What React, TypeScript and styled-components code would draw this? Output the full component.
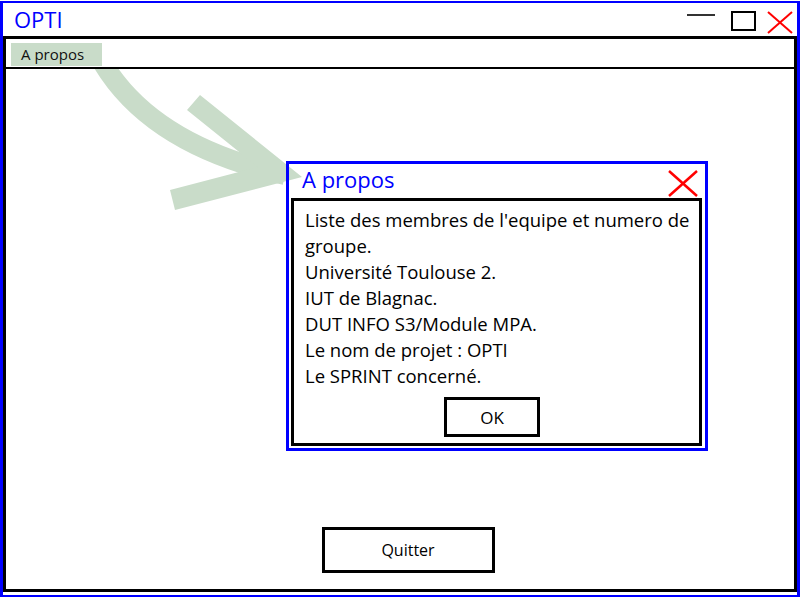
import React from "react";
import styled, { createGlobalStyle } from "styled-components";

const GlobalStyle = createGlobalStyle`
  html, body { margin: 0; padding: 0; background: #ffffff; }
  body { font-family: "Open Sans", "Noto Sans", sans-serif; color: #000; }
  * { box-sizing: border-box; }
`;

const GREEN = "#c9dcc9";
const BLUE = "#0000ff";
const RED = "#ff0000";

const Window = styled.div`
  width: 800px;
  height: 596px;
  margin-top: 1px;
  border-style: solid;
  border-color: ${BLUE};
  border-width: 2px 3px;
  display: flex;
  flex-direction: column;
`;

const TitleBar = styled.div`
  height: 33px;
  display: flex;
  align-items: flex-start;
  padding-left: 11px;
  padding-right: 4px;
`;

const AppTitle = styled.div`
  flex: 1;
  font-size: 22px;
  line-height: 33px;
  color: ${BLUE};
`;

const Controls = styled.div`
  display: flex;
  align-items: flex-start;
`;

const MinimizeBtn = styled.span`
  display: block;
  width: 28px;
  height: 2px;
  margin-top: 11px;
  background: #333333;
`;

const MaximizeBtn = styled.span`
  display: block;
  width: 25px;
  height: 20px;
  margin-top: 8px;
  margin-left: 16px;
  border: 2px solid #000;
`;

const CloseSvg = styled.svg<{ $ml: number; $mt: number }>`
  display: block;
  margin-left: ${(p) => p.$ml}px;
  margin-top: ${(p) => p.$mt}px;
`;

const Inner = styled.div`
  flex: 1;
  margin-bottom: 3px;
  border: 3px solid #000;
  display: flex;
  flex-direction: column;
`;

const MenuBar = styled.div`
  height: 30px;
  border-bottom: 2px solid #000;
  padding: 4px 0 0 5px;
  display: flex;
  align-items: flex-start;
`;

const MenuItem = styled.div`
  width: 91px;
  height: 23px;
  background: ${GREEN};
  padding-left: 10px;
  font-size: 15px;
  line-height: 22px;
  color: #111;
`;

const Content = styled.div`
  position: relative;
  flex: 1;
  overflow: hidden;
  display: flex;
  align-items: flex-end;
  justify-content: center;
  padding: 0 0 16px 16px;
`;

const ArrowSvg = styled.svg`
  position: absolute;
  left: 0;
  top: 0;
`;

const Button = styled.button<{ $w: number; $h: number; $fs: number }>`
  width: ${(p) => p.$w}px;
  height: ${(p) => p.$h}px;
  border: 3px solid #000;
  background: #fff;
  font-family: "Open Sans", "Noto Sans", sans-serif;
  font-size: ${(p) => p.$fs}px;
  color: #000;
  padding: 0;
  cursor: pointer;
`;

const Dialog = styled.div`
  position: absolute;
  left: 280px;
  top: 92px;
  width: 422px;
  height: 290px;
  border: 3px solid ${BLUE};
  background: transparent;
  display: flex;
  flex-direction: column;
`;

const DialogHeader = styled.div`
  height: 34px;
  display: flex;
  align-items: flex-start;
  justify-content: space-between;
  padding: 0 7px 0 13px;
`;

const DialogTitle = styled.div`
  font-size: 22px;
  line-height: 30px;
  color: ${BLUE};
`;

const DialogBody = styled.div`
  flex: 1;
  margin: 0 3px 2px 2px;
  border: 3px solid #000;
  background: #fff;
  padding: 6px 6px 0 11px;
  display: flex;
  flex-direction: column;
`;

const BodyText = styled.div`
  font-size: 18.5px;
  line-height: 26px;
`;

const ButtonRow = styled.div`
  display: flex;
  justify-content: center;
  margin-top: 8px;
  padding-right: 14px;
`;

const XIcon: React.FC<{ w: number; h: number; sw: number; ml: number; mt: number }> = ({ w, h, sw, ml, mt }) => (
  <CloseSvg width={w} height={h} viewBox={`0 0 ${w} ${h}`} $ml={ml} $mt={mt}>
    <line x1={1} y1={1} x2={w - 1} y2={h - 1} stroke={RED} strokeWidth={sw} />
    <line x1={w - 1} y1={1} x2={1} y2={h - 1} stroke={RED} strokeWidth={sw} />
  </CloseSvg>
);

const lines = [
  "Liste des membres de l'equipe et numero de groupe.",
  "Université Toulouse 2.",
  "IUT de Blagnac.",
  "DUT INFO S3/Module MPA.",
  "Le nom de projet : OPTI",
  "Le SPRINT concerné.",
];

export default function App() {
  return (
    <>
      <GlobalStyle />
      <Window>
        <TitleBar>
          <AppTitle>OPTI</AppTitle>
          <Controls>
            <MinimizeBtn />
            <MaximizeBtn />
            <XIcon w={26} h={23} sw={2} ml={11} mt={8} />
          </Controls>
        </TitleBar>
        <Inner>
          <MenuBar>
            <MenuItem>A propos</MenuItem>
          </MenuBar>
          <Content>
            <ArrowSvg width={788} height={520} viewBox="0 0 788 520">
              <g transform="translate(-6,-69)" fill={GREEN} stroke="none">
                <path d="M 101 60 Q 150 145 285 175" fill="none" stroke={GREEN} strokeWidth={20} />
                <polygon points="200,95 302,177 175,210 170,190 258,167 187,110" />
              </g>
            </ArrowSvg>
            <Dialog>
              <DialogHeader>
                <DialogTitle>A propos</DialogTitle>
                <XIcon w={30} h={27} sw={2.5} ml={0} mt={6} />
              </DialogHeader>
              <DialogBody>
                {lines.map((l) => (
                  <BodyText key={l}>{l}</BodyText>
                ))}
                <ButtonRow>
                  <Button $w={96} $h={40} $fs={17}>OK</Button>
                </ButtonRow>
              </DialogBody>
            </Dialog>
            <Button $w={173} $h={46} $fs={16}>Quitter</Button>
          </Content>
        </Inner>
      </Window>
    </>
  );
}
